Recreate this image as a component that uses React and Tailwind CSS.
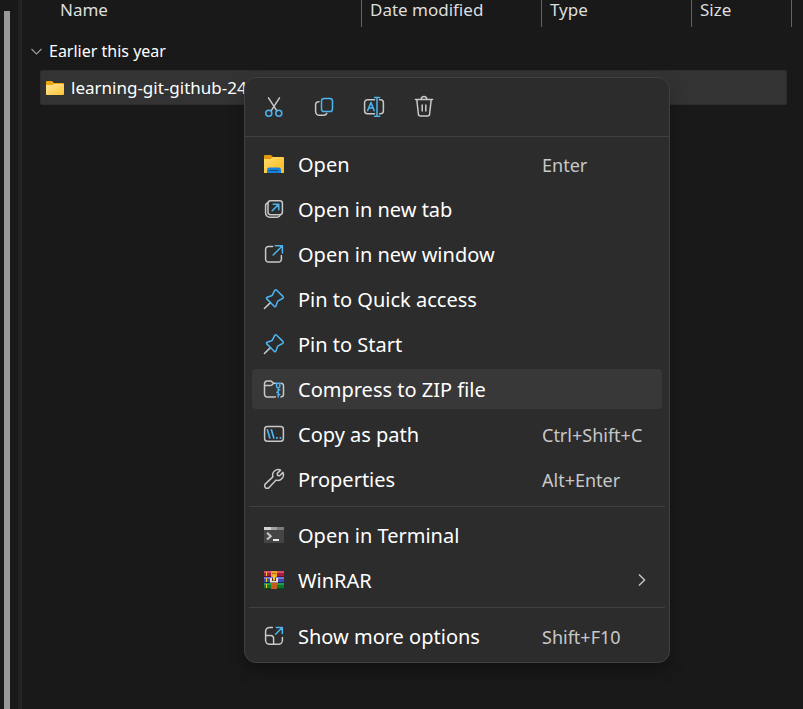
const LIGHT = "#c8c8c8";
const BLUE = "#4cb5ee";

function Icon({ children }) {
  return (
    <svg
      className="size-6 shrink-0"
      viewBox="0 0 24 24"
      fill="none"
      stroke={LIGHT}
      strokeWidth="1.5"
      strokeLinecap="round"
      strokeLinejoin="round"
      aria-hidden="true"
    >
      {children}
    </svg>
  );
}

const CutIcon = () => (
  <Icon>
    <path d="M6.5 2.8 14.9 15.8M17.5 2.8 9.1 15.8" />
    <circle cx="6.8" cy="18.3" r="3" stroke={BLUE} />
    <circle cx="16.8" cy="18.3" r="3" stroke={BLUE} />
  </Icon>
);

const CopyIcon = () => (
  <Icon>
    <path d="M7 6.7A3 3 0 0 0 3.6 9.7V16.5A3.8 3.8 0 0 0 7.4 20.3H11.8A3.2 3.2 0 0 0 14.8 18.4" />
    <rect x="9.5" y="3.5" width="11" height="13" rx="2.6" stroke={BLUE} />
  </Icon>
);

const RenameIcon = () => (
  <Icon>
    <path d="M12.5 4.7H5.6A3 3 0 0 0 2.6 7.7V15.8A3 3 0 0 0 5.6 18.8H12.5M17.6 4.7H18.4A3 3 0 0 1 21.4 7.7V15.8A3 3 0 0 1 18.4 18.8H17.6" />
    <path d="M15 2.6V21.2M12.6 2.6H17.6M12.6 21.2H17.6M5.6 15.6 9 7.6 12.2 15.6M6.8 13H11" stroke={BLUE} />
  </Icon>
);

const TrashIcon = () => (
  <Icon>
    <path d="M3.4 4.6H20.6M9.2 4.4A2.8 2.8 0 0 1 14.8 4.4M4.8 4.8 6.4 19A2 2 0 0 0 8.4 20.9H15.6A2 2 0 0 0 17.6 19L19.2 4.8M10.2 10V16M13.8 10V16" />
  </Icon>
);

const OpenFolderIcon = () => (
  <Icon>
    <g stroke="none">
      <path d="M2 4A1 1 0 0 1 3 3H9L11 5V8H2Z" fill="#e09a08" />
      <path d="M2 7H8.5L11 5H21A1 1 0 0 1 22 6V21H2Z" fill="url(#openFolder)" />
      <path d="M5 21V18A2.4 2.4 0 0 1 7.4 15.6H16.6A2.4 2.4 0 0 1 19 18V21Z" fill="#1682d8" />
      <path d="M7.5 18H16.5V19H7.5Z" fill="#0b4f8f" />
    </g>
    <defs>
      <linearGradient id="openFolder" x1="0" y1="0" x2="1" y2="1">
        <stop stopColor="#ffdc6b" />
        <stop offset="1" stopColor="#fbb91c" />
      </linearGradient>
    </defs>
  </Icon>
);

const NewTabIcon = () => (
  <Icon>
    <rect x="6" y="3.7" width="14.4" height="14" rx="2.6" />
    <path d="M6 5.8A3 3 0 0 0 3.6 8.6V16A4.2 4.2 0 0 0 7.8 20.2H15.4A3 3 0 0 0 18.2 17.9" />
    <path d="M10.2 13.8 16.6 7.4M11.2 7.2H16.8V12.8" stroke={BLUE} />
  </Icon>
);

const NewWindowIcon = () => (
  <Icon>
    <path d="M10.6 4.4H6.4A2.8 2.8 0 0 0 3.6 7.2V17.3A2.8 2.8 0 0 0 6.4 20.1H16.6A2.8 2.8 0 0 0 19.4 17.3V13.4" />
    <path d="M11.2 13 20.2 4M13.2 3.8H20.4V11" stroke={BLUE} />
  </Icon>
);

const PinIcon = () => (
  <Icon>
    <path d="M8.4 15.6 2.4 21.5" />
    <path
      d="M14.6 3.3 20.9 9.4Q22 10.6 20.5 11.5L16.2 13.9Q15.6 14.2 15.4 14.8L13.9 19.1Q13.4 20.4 12.4 19.5L4.8 11.9Q3.9 10.9 5.2 10.3L9.6 8.7Q10.2 8.5 10.5 7.9L12.6 3.7Q13.4 2.2 14.6 3.3Z"
      stroke={BLUE}
    />
  </Icon>
);

const ZipIcon = () => (
  <Icon>
    <path d="M13.4 19.9H5.1A2.6 2.6 0 0 1 2.5 17.3V6.7A2.6 2.6 0 0 1 5.1 4.1H8.5Q9.3 4.1 9.8 4.6L11.6 6.2H13.4M2.6 8.6H8.4Q9.3 8.6 9.9 8L11.6 6.2M19 6.2A2.6 2.6 0 0 1 21.5 8.8V17.3A2.6 2.6 0 0 1 19 19.9" />
    <path d="M14.6 6.2H17.8V9.2A1.6 1.6 0 0 1 14.6 9.2ZM16.2 11V20M16.4 12.8H17.8M14.8 15.2H16.2M16.4 17.6H17.8" stroke={BLUE} />
  </Icon>
);

const CopyPathIcon = () => (
  <Icon>
    <rect x="2.6" y="4.6" width="18.8" height="14.6" rx="2.8" />
    <path d="M5.4 7.8 7.8 16M9.4 7.8 11.8 16" stroke={BLUE} strokeWidth="1.7" />
    <path d="M14 15H15.8V16.8H14ZM17.6 15H19.4V16.8H17.6Z" fill={BLUE} stroke="none" />
  </Icon>
);

const WrenchIcon = () => (
  <Icon>
    <path d="M18.6 3.1A5.6 5.6 0 0 0 10.9 9.9L3.4 16.9A2.6 2.6 0 0 0 7.1 20.6L14.1 13.1A5.6 5.6 0 0 0 20.9 5.4L17.6 8.7 15.5 8.5 15.3 6.4Z" />
  </Icon>
);

const TerminalIcon = () => (
  <Icon>
    <g stroke="none">
      <path d="M2 4H22V20H2Z" fill="#454545" />
      <path d="M2 4H9V7H2Z" fill="#d2d2d2" />
      <path d="M9 4H15.5V7H9Z" fill="#a2a2a2" />
      <path d="M15.5 4H22V7H15.5Z" fill="#7c7c7c" />
      <path d="M11 16H17V18H11Z" fill="#e8e8e8" />
    </g>
    <path d="M5 9.8 8.8 13.2 5 16.6" stroke="#c8c8c8" strokeWidth="2" strokeLinecap="butt" strokeLinejoin="miter" />
  </Icon>
);

const WinRarIcon = () => (
  <Icon>
    <g stroke="none">
      <path d="M2 3H22V9H2Z" fill="#a81c40" />
      <path d="M2 3H22V5H2Z" fill="#dc4a72" />
      <path d="M2 8H22V9H2Z" fill="#5a1024" />
      <path d="M2 9H22V15H2Z" fill="#4347b4" />
      <path d="M2 9H22V11H2Z" fill="#7379dc" />
      <path d="M2 14H22V15H2Z" fill="#20235c" />
      <path d="M2 15H22V21H2Z" fill="#0c7a2c" />
      <path d="M2 15H22V17H2Z" fill="#1fa04a" />
      <path d="M2 20H22V21H2Z" fill="#074d1c" />
      <path d="M4 4H5V8H4ZM4 10H5V14H4ZM4 16H5V20H4Z" fill="#f6c22e" />
      <path d="M9 3H15V9H9Z" fill="#eda02a" />
      <path d="M10 5H14V6H10Z" fill="#b4671c" />
      <path d="M8 10H16V15H8Z" fill="#54301a" />
      <path d="M9 15H15V21H9Z" fill="#c65a1c" />
      <path d="M8 10H10V13H14V10H16V14.4H8Z" fill="#e6e0d4" />
      <path d="M11 7H13V12.4H11Z" fill="#f6c22e" />
    </g>
  </Icon>
);

const MoreIcon = () => (
  <Icon>
    <path d="M10.4 3.4H7.6A4 4 0 0 0 3.6 7.4V16.3A4 4 0 0 0 7.6 20.3H16.4A4 4 0 0 0 20.4 16.3V13.6M3.8 11.6H8.6A3 3 0 0 1 11.6 14.6V20.2" />
    <path d="M13.6 10.2 20 3.8M14.4 3.5H20.3V9.4" stroke={BLUE} />
  </Icon>
);

const TOOLS = [
  { label: "Cut", icon: CutIcon },
  { label: "Copy", icon: CopyIcon },
  { label: "Rename", icon: RenameIcon },
  { label: "Delete", icon: TrashIcon },
];

const GROUPS = [
  [
    { label: "Open", icon: OpenFolderIcon, keys: "Enter" },
    { label: "Open in new tab", icon: NewTabIcon },
    { label: "Open in new window", icon: NewWindowIcon },
    { label: "Pin to Quick access", icon: PinIcon },
    { label: "Pin to Start", icon: PinIcon },
    { label: "Compress to ZIP file", icon: ZipIcon, active: true },
    { label: "Copy as path", icon: CopyPathIcon, keys: "Ctrl+Shift+C" },
    { label: "Properties", icon: WrenchIcon, keys: "Alt+Enter" },
  ],
  [
    { label: "Open in Terminal", icon: TerminalIcon },
    { label: "WinRAR", icon: WinRarIcon, submenu: true },
  ],
  [{ label: "Show more options", icon: MoreIcon, keys: "Shift+F10" }],
];

function MenuItem({ label, icon: ItemIcon, keys, submenu, active }) {
  return (
    <button
      type="button"
      role="menuitem"
      className={`flex h-10 w-full items-center rounded pl-[10px] text-left ${active ? "bg-[#383838]" : "hover:bg-[#383838]"}`}
    >
      <ItemIcon />
      <span className="flex-1 pt-[2px] pl-3 text-[20px] leading-6 whitespace-nowrap text-white">{label}</span>
      {keys && <span className="w-[120px] shrink-0 pt-[2px] text-[18px] leading-6 whitespace-nowrap text-[#c8c8c8]">{keys}</span>}
      {submenu && (
        <svg className="mr-3 size-4" viewBox="0 0 16 16" fill="none" stroke="#c8c8c8" strokeWidth="1.4" aria-hidden="true">
          <path d="M5 2.4 10.6 8 5 13.6" />
        </svg>
      )}
    </button>
  );
}

function ContextMenu() {
  return (
    <div
      role="menu"
      className="absolute top-[77px] left-[244px] w-[426px] rounded-xl border border-[#404040] bg-[#2c2c2c] shadow-[0_8px_16px_rgba(0,0,0,0.28)]"
    >
      <div className="flex h-[59px] items-center gap-[10px] border-b border-[#404040] px-[9px]">
        {TOOLS.map(({ label, icon: ToolIcon }) => (
          <button key={label} type="button" aria-label={label} className="flex size-10 items-center justify-center rounded hover:bg-[#383838]">
            <ToolIcon />
          </button>
        ))}
      </div>
      <div className="pt-[7px] pb-[6px]">
        {GROUPS.map((items, index) => (
          <div key={items[0].label}>
            {index > 0 && <hr className="mx-1 mt-[7px] mb-2 border-[#404040]" />}
            <div className="flex flex-col gap-[5px] px-[7px]">
              {items.map((item) => (
                <MenuItem key={item.label} {...item} />
              ))}
            </div>
          </div>
        ))}
      </div>
    </div>
  );
}

function ColumnHeader({ children, className }) {
  return (
    <div role="columnheader" className={`h-[27px] border-r border-[#636363] pl-2 text-[17px] leading-5 text-[#dedede] ${className}`}>
      {children}
    </div>
  );
}

export default function App() {
  return (
    <div className="relative flex min-h-screen overflow-hidden bg-[#191919] font-['Noto_Sans','Open_Sans',sans-serif]">
      <div className="flex w-[22px] shrink-0 justify-between pt-[11px] pl-1">
        <div className="w-[6px] bg-[#999999]" />
        <div className="-mt-[11px] w-1 border-r-2 border-[#262626] bg-[#202020]" />
      </div>
      <main className="min-w-0 flex-1">
        <div role="row" className="flex pr-[11px] pl-[30px]">
          <ColumnHeader className="flex-1">Name</ColumnHeader>
          <ColumnHeader className="w-[180px]">Date modified</ColumnHeader>
          <ColumnHeader className="w-[150px]">Type</ColumnHeader>
          <ColumnHeader className="w-[100px]">Size</ColumnHeader>
        </div>
        <button type="button" className="mt-3 ml-2 flex h-6 items-center gap-[6px] text-[16px] leading-6 text-white">
          <svg className="size-[13px]" viewBox="0 0 13 13" fill="none" stroke="#9a9a9a" strokeWidth="1.2" aria-hidden="true">
            <path d="M1.5 4 6.5 9 11.5 4" />
          </svg>
          Earlier this year
        </button>
        <div className="mt-[7px] mr-4 ml-[18px] flex h-[35px] items-center gap-[6px] rounded-xs border border-[#2d2d2d] bg-[#333333] pl-1 text-[17px] leading-6 whitespace-nowrap text-white">
          <svg className="h-4 w-5" viewBox="0 0 20 16" aria-hidden="true">
            <path d="M1 2A1 1 0 0 1 2 1H7L9 3H18A1 1 0 0 1 19 4V8H1Z" fill="#f2a60f" />
            <path d="M1 5H7.4L9 4H18A1 1 0 0 1 19 5V14A1 1 0 0 1 18 15H2A1 1 0 0 1 1 14Z" fill="url(#rowFolder)" />
            <defs>
              <linearGradient id="rowFolder" x1="0" y1="0" x2="1" y2="1">
                <stop stopColor="#ffe59a" />
                <stop offset="1" stopColor="#ffc534" />
              </linearGradient>
            </defs>
          </svg>
          learning-git-github-24
        </div>
      </main>
      <ContextMenu />
    </div>
  );
}
